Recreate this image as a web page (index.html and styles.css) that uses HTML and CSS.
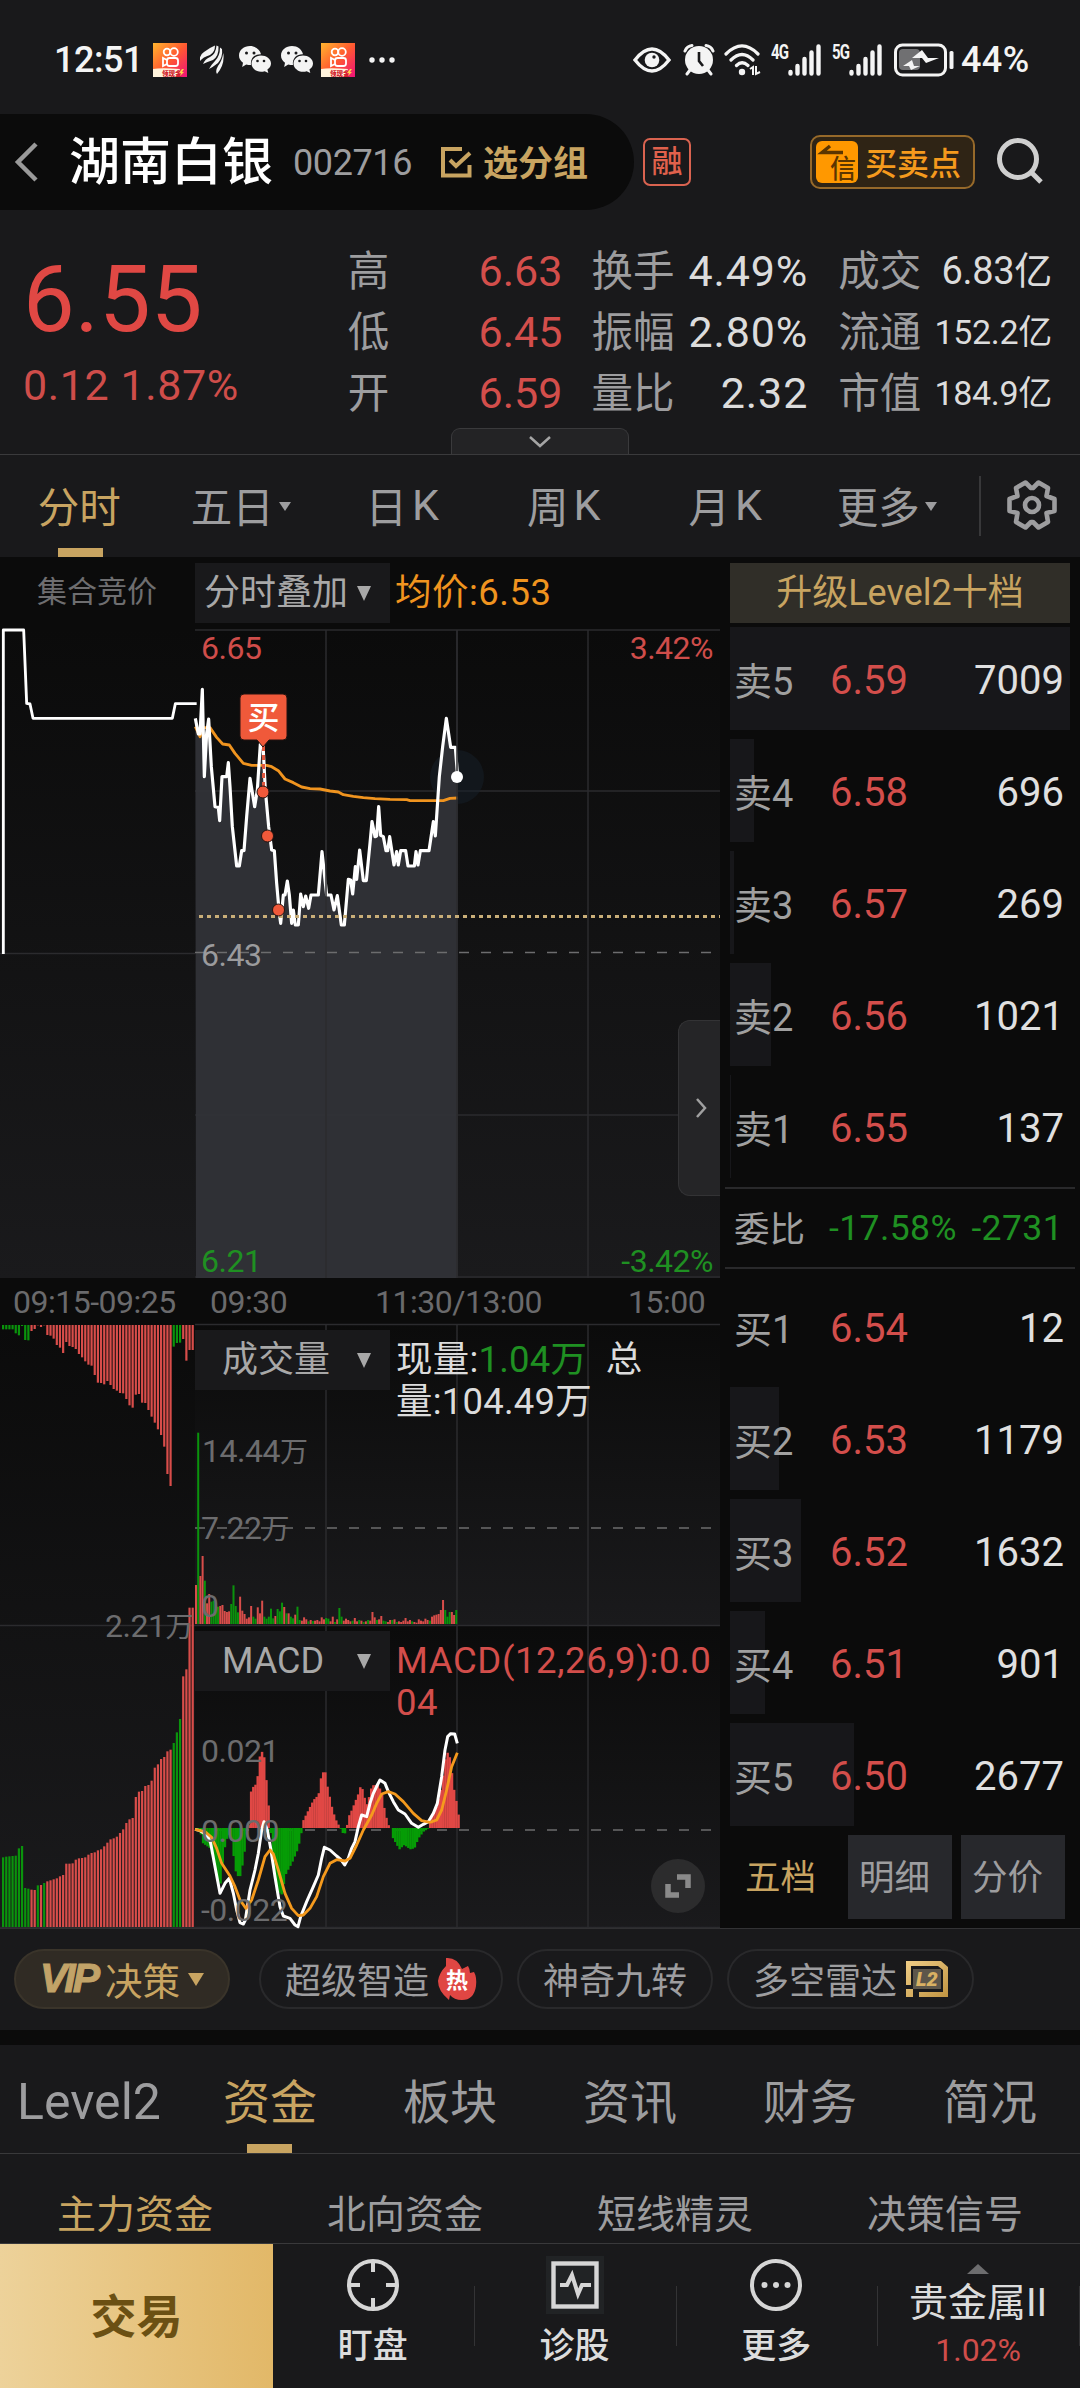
FILE: index.html
```html
<!DOCTYPE html>
<html lang="zh-CN">
<head>
<meta charset="utf-8">
<title>湖南白银 002716</title>
<link rel="stylesheet" href="styles.css">
</head>
<body>
<svg width="0" height="0" class="defs">
  <defs>
    <linearGradient id="ks" x1="0" y1="0" x2="1" y2="1"><stop offset="0" stop-color="#ffb52e"/><stop offset=".5" stop-color="#ff5a30"/><stop offset="1" stop-color="#f0127a"/></linearGradient>
    <linearGradient id="gold" x1="0" y1="0" x2="1" y2="1"><stop offset="0" stop-color="#f0cd86"/><stop offset="1" stop-color="#c09442"/></linearGradient>
    <linearGradient id="panel" x1="0" y1="0" x2="0" y2="1"><stop offset="0" stop-color="#0b0b0b"/><stop offset="1" stop-color="#1a1a1c"/></linearGradient>
    <symbol id="kuaishou" viewBox="0 0 34 34">
      <rect width="34" height="34" fill="url(#ks)"/>
      <g fill="none" stroke="#fff" stroke-width="1.8"><circle cx="14" cy="9" r="3.3"/><circle cx="21" cy="9" r="3.8"/><rect x="14" y="15" width="11" height="8" rx="2.5"/><path d="M14 17l-4-2v8l4-2"/></g>
      <path d="M0 26q8-1.500 27 0l-4 8H0z" fill="#fff3dc"/>
      <text x="9" y="33" class="mini">领现金</text>
      <path d="M29 26l-3 4h2l-1 3 4-4h-2l2-3z" fill="#ffd24a"/>
    </symbol>
    <symbol id="wechat" viewBox="0 0 32 27">
      <path d="M11 0C5 0 0 4 0 9.500c0 3 1.500 5.500 4 7.200L3.200 21l4-2.600c1.500.5 3 .6 4.800.6C11 12 16 8 22 8.200 21 3.400 16.500 0 11 0z" fill="#f4f4f4"/>
      <path d="M22 9.500c-5 0-9.500 3.400-9.500 8s4.500 8.300 9.500 8.300c1.400 0 2.500-.2 3.700-.6l3.600 1.800-.9-3.400c2.200-1.500 3.600-3.600 3.600-6.100 0-4.600-4.700-8-10-8z" fill="#f4f4f4"/>
      <g fill="#19191b"><circle cx="7.500" cy="7" r="1.500"/><circle cx="15" cy="7" r="1.500"/><circle cx="18.500" cy="15" r="1.300"/><circle cx="25" cy="15" r="1.300"/></g>
    </symbol>
    <symbol id="signal" viewBox="0 0 34 32"><path d="M2.500 28v1.500M9.500 22v7.500M16.500 15v14.500M23.500 8.500v21M30.500 2.500v27" stroke="#f4f4f4" stroke-width="4.400" stroke-linecap="round"/></symbol>
  </defs>
</svg>
<div class="screen">
  <header class="status">
    <div class="status-left">
      <span class="clock">12:51</span>
      <svg class="s-ks" width="34" height="34"><use href="#kuaishou"/></svg>
      <svg class="s-leaf" width="24" height="29" viewBox="0 0 24 29" fill="#f4f4f4"><path d="M0 16Q-1 10 4 7 9 3 15 .5 15 7 10 10 3 12 0 16z"/><path d="M3 19Q5 14 10 12 16 9 16.500 .500L18.500 1.500Q19 11 13 15 7 17 3 19z"/><path d="M9 24Q11 20 15 16 20 11 20 2.500L22 4Q23 12 18 18 13 22 9 24z"/><path d="M17 29Q15 26 18 21 22 16 23.300 8 25 20 17 29z"/></svg>
      <svg class="s-wx" width="32" height="27"><use href="#wechat"/></svg>
      <svg class="s-wx2" width="32" height="27"><use href="#wechat"/></svg>
      <svg class="s-ks2" width="34" height="34"><use href="#kuaishou"/></svg>
      <svg class="s-dots" width="26" height="6" fill="#f4f4f4"><circle cx="3" cy="3" r="2.700"/><circle cx="13" cy="3" r="2.700"/><circle cx="23" cy="3" r="2.700"/></svg>
    </div>
    <div class="status-right">
      <svg width="38" height="26" viewBox="0 0 38 26"><path d="M2 13Q19-9 36 13 19 35 2 13z" fill="none" stroke="#f4f4f4" stroke-width="3.400"/><circle cx="19" cy="13" r="7.300" fill="#f4f4f4"/><circle cx="21" cy="10" r="1.700" fill="#19191b"/></svg>
      <svg class="s-alarm" width="32" height="32" viewBox="0 0 32 32"><g stroke="#f4f4f4" stroke-width="3" stroke-linecap="round" fill="none"><path d="M2 7q2-5 7-5.500M30 7q-2-5-7-5.500M7 26l-3 4M25 26l3 4"/></g><circle cx="16" cy="16" r="14" fill="#f4f4f4"/><path d="M16 8v9l4 5" stroke="#19191b" stroke-width="2.600" fill="none"/></svg>
      <svg class="s-wifi" width="38" height="32" viewBox="0 0 38 32"><g fill="none" stroke="#f4f4f4" stroke-width="3.200" stroke-linecap="round"><path d="M2 10Q18-6 34 10M7 16Q18 5 29 16M12.500 21.500Q18 16 24 21.500"/></g><circle cx="18" cy="28" r="3.200" fill="#f4f4f4"/><path d="M26 25l3-2v8M36 28l-4 2v-8" fill="none" stroke="#f4f4f4" stroke-width="2"/></svg>
      <span class="net n4">4G</span><svg width="34" height="32"><use href="#signal"/></svg>
      <span class="net n5">5G</span><svg width="34" height="32"><use href="#signal"/></svg>
      <svg class="s-bat" width="60" height="34" viewBox="0 0 60 34"><rect x="1.500" y="2" width="50" height="30" rx="7" fill="none" stroke="#f4f4f4" stroke-width="3"/><rect x="5" y="6" width="21" height="21" rx="4" fill="#707072"/><rect x="55.500" y="8" width="4" height="18" rx="1.500" fill="#f4f4f4"/><path d="M28 7l-10 8h10l4 5 13-5H34zM18 17l-9 6h6l2 4 9-4h-6z" fill="#f4f4f4"/></svg>
      <span class="pct">44%</span>
    </div>
  </header>

  <section class="title-row">
    <div class="title-pill">
      <svg class="back" width="24" height="40" viewBox="0 0 24 40"><path d="M22 2L4 20l18 18" fill="none" stroke="#9a9a9a" stroke-width="4.500"/></svg>
      <h1>湖南白银</h1><span class="code">002716</span>
      <svg class="check" width="31" height="31" viewBox="0 0 31 31" fill="none" stroke="#c8a461" stroke-width="4"><path d="M21 2H2v26.500h26.500V18"/><path d="M9 13l6 6L29 6"/></svg>
      <b class="group">选分组</b>
    </div>
    <span class="rong">融</span>
    <span class="signal-btn"><svg width="42" height="42" viewBox="0 0 42 42"><rect width="42" height="42" rx="6" fill="#ff9800"/><path d="M27 11.500H6L14 5" fill="none" stroke="#5b3500" stroke-width="3.400"/><text x="14" y="37" class="xin">信</text></svg><span>买卖点</span></span>
    <svg class="search" width="50" height="50" viewBox="0 0 50 50" fill="none" stroke="#cfcfcf" stroke-width="5"><circle cx="22" cy="22" r="18.500"/><path d="M35 35l10 10"/></svg>
  </section>

  <section class="quote">
    <div class="now"><strong>6.55</strong><span>0.12 1.87%</span></div>
    <dl class="q1"><dt>高</dt><dd>6.63</dd><dt>低</dt><dd>6.45</dd><dt>开</dt><dd>6.59</dd></dl>
    <dl class="q2"><dt>换手</dt><dd>4.49%</dd><dt>振幅</dt><dd>2.80%</dd><dt>量比</dt><dd>2.32</dd></dl>
    <dl class="q3"><dt>成交</dt><dd class="mid">6.83亿</dd><dt>流通</dt><dd>152.2亿</dd><dt>市值</dt><dd>184.9亿</dd></dl>
    <div class="pull"><svg width="22" height="12" viewBox="0 0 22 12"><path d="M1 1l10 9L21 1" fill="none" stroke="#a5a5a5" stroke-width="2.500"/></svg></div>
  </section>

  <nav class="periods">
    <a class="on">分时</a><a>五日<i class="tri"></i></a><a>日<em>K</em></a><a>周<em>K</em></a><a>月<em>K</em></a><a>更多<i class="tri"></i></a>
    <span class="gear"><svg width="54" height="54" viewBox="-27 -27 54 54" fill="none" stroke="#9d9d9f" stroke-width="4.600" stroke-linejoin="round"><path d="M-6.500-22.500L-16-17l1.500 8L-22.500-6v12l8 2L-16 17l9.500 5.500L-1 17h2l5.500 5.500L16 17l-1.500-9 8-2V-6l-8-3L16-17l-9.500-5.500L1-17h-2z"/><circle r="7"/></svg></span>
  </nav>

  <main class="board">
    <div class="charts">
      <div class="chart-head">
        <span class="auction">集合竞价</span>
        <span class="drop wide">分时叠加<i class="arrow"></i></span>
        <span class="avg">均价:6.53</span>
      </div>
      <div class="panel">
        <svg width="720" height="649" viewBox="0 629 720 649">
          <rect y="629" width="720" height="649" fill="url(#panel)"/>
          <g class="grid"><path d="M195 630H720M195 791H720M195 1115H720M195 1277H720M326 630V1278M457 630V1278M588 630V1278M0 953.500H195"/></g>
          <circle cx="457" cy="777" r="27" fill="#16202a" opacity=".5"/>
          <g id="price" transform="translate(0 600) scale(.33333)"></g>
          <path class="grid" d="M326 840V1278M457 630V1278"/>
          <path class="dash" d="M195 952.500H720" stroke-dasharray="10 12"/>
          <path class="gold-dots" d="M199 916.500H720"/>
          <text class="lab red" x="201" y="659">6.65</text><text class="lab red end" x="713" y="659">3.42%</text>
          <text class="lab mid-lab" x="201" y="966">6.43</text>
          <text class="lab green" x="201" y="1272">6.21</text><text class="lab green end" x="713" y="1272">-3.42%</text>
          <path d="M263.500 746V788" stroke="#e0583f" stroke-width="3" stroke-dasharray="5 4"/>
          <g fill="#f0593a" stroke="#241310" stroke-width="1"><circle cx="263" cy="792" r="6"/><circle cx="267.500" cy="836" r="6"/><circle cx="278.500" cy="910" r="6"/><path d="M244 694H283a4 4 0 0 1 4 4V736a4 4 0 0 1-4 4H269l-6 7-6-7H244a4 4 0 0 1-4-4V698a4 4 0 0 1 4-4z"/></g>
          <text class="buy" x="263.500" y="729">买</text>
          <circle cx="457" cy="777" r="6" fill="#fff"/>
        </svg>
        <div class="side-handle"><svg width="14" height="22" viewBox="0 0 14 22"><path d="M2 2l8 9-8 9" fill="none" stroke="#a0a0a0" stroke-width="2.500"/></svg></div>
      </div>
      <div class="times"><span>09:15-09:25</span><span>09:30</span><span>11:30/13:00</span><span>15:00</span></div>
      <div class="panel">
        <svg width="720" height="604" viewBox="0 1324 720 604">
          <rect y="1324" width="195" height="604" fill="url(#panel)"/>
          <rect x="195" y="1324" width="525" height="301" fill="url(#panel)"/>
          <rect x="195" y="1626" width="525" height="302" fill="url(#panel)"/>
          <path class="grid" d="M195 1324.500H720M0 1625.500H720M0 1927.500H720M326 1324V1928M457 1324V1928M588 1324V1928"/>
          <path class="dash" d="M195 1528H720" stroke-dasharray="10 12"/>
          <path class="dash" d="M195 1830H720" stroke-dasharray="10 12"/>
          <g id="auction"></g><g id="volume"></g>
          <g id="macd" transform="translate(180 1600) scale(.33333)"></g>
          <text class="lab gray" x="202" y="1462">14.44<tspan class="wan">万</tspan></text><text class="lab gray" x="201" y="1539">7.22<tspan class="wan">万</tspan></text><text class="lab gray" x="201" y="1617">0</text>
          <text class="lab gray end" x="193" y="1637">2.21<tspan class="wan">万</tspan></text>
          <text class="lab gray" x="201" y="1762">0.021</text><text class="lab gray" x="201" y="1842">0.000</text><text class="lab gray" x="201" y="1921">-0.022</text>
        </svg>
        <div class="over vol"><span class="drop">成交量<i class="arrow"></i></span><p>现量:<span class="g">1.04万</span>&nbsp; 总<br>量:104.49万</p></div>
        <div class="over mac"><span class="drop">MACD<i class="arrow"></i></span><p class="r">MACD(12,26,9):0.0<br>04</p></div>
        <div class="expand"><svg width="28" height="26" viewBox="0 0 28 26" fill="none" stroke="#8a8a8a" stroke-width="5.500"><path d="M13 4h11v11M4 11v11h11"/></svg></div>
      </div>
    </div>

    <aside class="book">
      <div class="upgrade">升级Level2十档</div>
      <ul>
        <li><i style="width:340px"></i><b>卖5</b><em>6.59</em><span>7009</span></li>
        <li><i style="width:24px"></i><b>卖4</b><em>6.58</em><span>696</span></li>
        <li><i style="width:4px"></i><b>卖3</b><em>6.57</em><span>269</span></li>
        <li><i style="width:41px"></i><b>卖2</b><em>6.56</em><span>1021</span></li>
        <li><i style="width:1px"></i><b>卖1</b><em>6.55</em><span>137</span></li>
      </ul>
      <div class="ratio"><b>委比</b><span>-17.58%</span><span>-2731</span></div>
      <ul>
        <li><i style="width:0px"></i><b>买1</b><em>6.54</em><span>12</span></li>
        <li><i style="width:49px"></i><b>买2</b><em>6.53</em><span>1179</span></li>
        <li><i style="width:71px"></i><b>买3</b><em>6.52</em><span>1632</span></li>
        <li><i style="width:35px"></i><b>买4</b><em>6.51</em><span>901</span></li>
        <li><i style="width:124px"></i><b>买5</b><em>6.50</em><span>2677</span></li>
      </ul>
      <div class="book-tabs"><a class="on">五档</a><a>明细</a><a>分价</a></div>
    </aside>
  </main>

  <section class="chips">
    <span class="chip vip"><b>VIP</b>决策<i class="arrow"></i></span>
    <span class="chip c2">超级智造<svg width="40" height="44" viewBox="0 0 40 44"><path d="M9 1Q20 0 25 12l6-3Q33 12 33 16l4-1Q40 20 39 29 37 43 25 43q-8 0-12-5l-1 5Q1 34 1 24 2 16 9 9z" fill="#e04643"/><text x="9" y="31" class="hot">热</text></svg></span>
    <span class="chip c3">神奇九转</span>
    <span class="chip c4">多空雷达<svg width="42" height="36" viewBox="0 0 42 36"><path d="M0 0H35l7 6V36H13V31H37V9L32 5H5V24H0zM0 28H7V36H0z" fill="url(#gold)"/><rect x="7" y="8" width="28" height="20" fill="#5d564a"/><text x="10" y="25" class="l2">L2</text></svg></span>
  </section>

  <nav class="info-tabs"><a class="lv">Level2</a><a class="on">资金</a><a>板块</a><a>资讯</a><a>财务</a><a>简况</a></nav>
  <nav class="sub-tabs"><a class="on">主力资金</a><a>北向资金</a><a>短线精灵</a><a>决策信号</a></nav>

  <footer class="bottom">
    <a class="trade">交易</a>
    <a class="item"><svg width="58" height="58" viewBox="-29 -29 58 58" fill="none" stroke="#d6d6d6" stroke-width="4"><circle r="24"/><path d="M0-24v11M0 24V13M-24 0h11M24 0H13"/></svg>盯盘</a>
    <a class="item"><svg width="58" height="58" viewBox="-29 -29 58 58" fill="none" stroke="#d6d6d6" stroke-width="4.400"><rect x="-29" y="-29" width="58" height="58" fill="#212325" stroke="none"/><rect x="-21.500" y="-21.500" width="43" height="43"/><path d="M-15 0h7l5-10 6 19 4-9h9" stroke-width="4"/></svg>诊股</a>
    <a class="item"><svg width="58" height="58" viewBox="-29 -29 58 58" fill="none" stroke="#d6d6d6" stroke-width="4"><circle r="24"/><g fill="#d6d6d6" stroke="none"><circle cx="-11.500" r="3"/><circle r="3"/><circle cx="11.500" r="3"/></g></svg>更多</a>
    <a class="item sector"><i class="up"></i><span>贵金属II</span><small>1.02%</small></a>
  </footer>
</div>
<script src="chart.js"></script>
</body>
</html>
```
FILE: styles.css
```css
* { box-sizing: border-box; margin: 0; padding: 0; }
body { width: 1080px; background: #19191b; font-family: Roboto, "Noto Sans CJK SC", sans-serif; color: #9d9d9f; }
svg { display: block; flex: none; }
i, em { font-style: normal; }
.defs { position: absolute; }
.screen { width: 1080px; height: 2388px; overflow: hidden; display: flex; flex-direction: column; white-space: nowrap; }
.screen > * { flex: none; }

.status { height: 114px; padding: 0 47px 0 54px; display: flex; justify-content: space-between; align-items: center; color: #f4f4f4; }
.status-left, .status-right { display: flex; align-items: center; height: 40px; margin-top: 5px; }
.clock { width: 99px; font-size: 36px; font-weight: 500; letter-spacing: -.5px; }
.s-leaf { margin-left: 13px; }
.s-wx { margin-left: 15px; }
.s-wx2 { margin-left: 10px; }
.s-ks2 { margin-left: 8px; }
.s-dots { margin-left: 14px; }
.s-alarm { margin-left: 12px; }
.s-wifi { margin-left: 9px; }
.net { font-size: 20px; font-weight: 700; line-height: 16px; width: 17px; align-self: flex-start; margin-top: 4px; letter-spacing: -1px; transform: scaleX(.75); transform-origin: 0 0; }
.n4 { margin-left: 9px; }
.n5 { margin-left: 10px; }
.s-bat { margin-left: 11px; }
.pct { width: 72px; margin-left: 7px; font-size: 36px; font-weight: 500; letter-spacing: .4px; }
.mini { font-size: 6.500px; font-weight: 900; fill: #d0202c; }

.title-row { height: 96px; display: flex; align-items: center; }
.title-pill { width: 634px; height: 96px; background: #0b0b0b; border-radius: 0 48px 48px 0; display: flex; align-items: center; padding-left: 14px; }
.title-pill h1 { width: 224px; margin: 2px 0 0 31px; font-size: 51px; line-height: 60px; font-weight: 500; color: #fff; }
.code { width: 148px; font-size: 36px; letter-spacing: -.4px; margin-top: 2px; }
.group { margin: -3px 0 0 11px; font-size: 35px; color: #c8a461; }
.rong { width: 48px; height: 48px; margin-left: 9px; border: 2px solid #d96350; border-radius: 7px; font-size: 31px; line-height: 43px; text-align: center; color: #e0614c; font-weight: 500; }
.signal-btn { width: 165px; height: 54px; margin-left: 119px; border: 2px solid #96692a; border-radius: 10px; background: #2f2415; display: flex; align-items: center; gap: 7px; padding-left: 4px; font-size: 32px; font-weight: 500; color: #f59a1d; }
.signal-btn span { margin-top: -3px; }
.xin { font-size: 26px; fill: #5b3500; }
.search { margin-left: 21px; }

.quote { position: relative; height: 245px; border-bottom: 1px solid #3a3a3c; display: flex; padding: 31px 28px 0 23px; }
.now { width: 325px; color: #e04844; display: flex; flex-direction: column; }
.now strong { font-size: 92px; font-weight: 400; line-height: 117px; letter-spacing: 0; }
.now span { font-size: 43px; line-height: 54px; letter-spacing: .6px; color: #cf4d4a; }
.quote dl { display: grid; grid-template-columns: auto 1fr; grid-auto-rows: 61px; align-items: center; line-height: 61px; height: 183px; }
.quote dt { font-size: 41.500px; }
.quote dd { font-size: 43px; text-align: right; color: #dcdcdc; }
.q1 { width: 215px; }
.quote .q1 dd { color: #d34e4b; }
.q2 { width: 217px; margin-left: 29px; }
.quote .q2 dd { letter-spacing: .9px; }
.q3 { width: 214px; margin-left: 30px; }
.quote .q3 dd { font-size: 34px; letter-spacing: -.3px; }
.quote .q3 .mid { font-size: 38px; }
.pull { position: absolute; left: 451px; bottom: 0; width: 178px; height: 26px; border: 1px solid #3a3a3c; border-bottom: 0; border-radius: 9px 9px 0 0; background: #232325; display: flex; justify-content: center; align-items: center; }

.periods { height: 102px; display: flex; font-size: 41.500px; }
.periods a { width: 161.500px; display: flex; align-items: center; justify-content: center; padding: 0 3px 2px 0; }
.periods em { margin-left: 5px; font-size: 43px; }
.periods .on { color: #c8a461; background: linear-gradient(#c8a461, #c8a461) 58px 100% / 45px 9px no-repeat; }
.tri { margin: 2px 0 0 5px; border: 6px solid transparent; border-top: 9px solid #9d9d9f; border-bottom: 0; }
.gear { width: 101px; height: 60px; margin: 21px 0 0 10px; border-left: 2px solid #38383a; padding: 2px 0 0 24px; }

.board { height: 1371px; display: flex; background: #0b0b0b; }
.charts { width: 720px; }
.chart-head { height: 72px; display: flex; padding-top: 6px; }
.auction { width: 195px; padding: 0 0 0 37px; font-size: 30px; line-height: 58px; color: #6e6e70; }
.drop { width: 195px; height: 60px; background: #19191b; color: #a8a8a8; font-size: 36px; line-height: 60px; display: flex; align-items: center; justify-content: space-between; padding: 0 19px 0 27px; }
.drop.wide { padding-left: 9px; }
.arrow { border: 7.500px solid transparent; border-top: 15px solid #a8a8a8; border-bottom: 0; }
.avg { margin-left: 5px; font-size: 36.500px; letter-spacing: .5px; line-height: 60px; color: #f0941f; }
.panel { position: relative; }
.panel > svg { overflow: visible; }
.grid { stroke: #2b2b2e; stroke-width: 1.500; fill: none; }
.dash { stroke: #6c6c6e; stroke-width: 1.500; }
.gold-dots { stroke: #c9ae78; stroke-width: 3; stroke-dasharray: 4 4; }
.lab { font-size: 32px; letter-spacing: -.5px; }
.wan { font-size: 28px; }
.end { text-anchor: end; }
.red { fill: #cf4d4a; }
.green { fill: #1f9022; }
.gray { fill: #6c6c6e; }
.mid-lab { fill: #9b9b9d; }
.buy { font-size: 32px; fill: #fff; text-anchor: middle; font-weight: 500; }
.side-handle { position: absolute; right: 0; top: 391px; width: 42px; height: 176px; border-radius: 12px 0 0 12px; background: #252527; border: 1px solid #333335; border-right: 0; display: flex; align-items: center; padding-left: 16px; }
.times { height: 46px; display: grid; grid-template-columns: 197px 165px 253px 90px; align-items: center; padding: 2px 0 0 13px; font-size: 32px; letter-spacing: -.5px; color: #6a6a6c; }
.over { position: absolute; left: 195px; right: 0; display: flex; font-size: 36.500px; line-height: 42px; color: #dcdcdc; }
.vol { top: 6px; }
.mac { top: 307px; }
.over p { margin-left: 6px; padding-top: 9px; letter-spacing: .2px; }
.over .r { color: #d34e4b; font-size: 36.500px; letter-spacing: .6px; }
.g { color: #1f9022; }
.expand { position: absolute; left: 651px; top: 535px; width: 54px; height: 54px; border-radius: 50%; background: #2c2c2d; display: flex; align-items: center; justify-content: center; }

.book { width: 342px; margin-left: 10px; padding-top: 6px; }
.upgrade { width: 340px; height: 60px; background: #302e28; color: #c8a461; font-size: 36px; line-height: 60px; text-align: center; margin-bottom: 4px; }
.book ul { list-style: none; display: grid; grid-auto-rows: 103px; gap: 9px; }
.book li { position: relative; display: flex; align-items: center; width: 340px; padding: 3px 6px 0 4px; }
.book li i { position: absolute; left: 0; top: 0; height: 103px; background: #17171a; }
.book li b, .book li em, .book li span { position: relative; }
.book li b { width: 96px; margin-top: -3px; font-size: 38px; font-weight: 400; color: #a0a0a0; }
.book li em { font-size: 40px; color: #d34e4b; }
.book li span { margin-left: auto; font-size: 40px; color: #e0e0e0; }
.ratio { height: 82px; margin: 9px 0 6px -5px; width: 350px; border: solid #29292b; border-width: 2px 0; display: flex; align-items: center; padding: 0 0 0 9px; font-size: 35.500px; letter-spacing: .4px; color: #1f9022; }
.ratio b { width: 95px; margin-top: -3px; font-weight: 400; color: #a0a0a0; letter-spacing: 0; }
.ratio span + span { margin-left: auto; padding-right: 12px; }
.book-tabs { display: flex; gap: 9px; margin-top: 9px; width: 335px; }
.book-tabs a { width: 104px; height: 84px; background: #27282c; font-size: 35.500px; line-height: 86px; padding-left: 11px; }
.book-tabs .on { width: 109px; background: none; color: #c8a461; padding-left: 15px; }

.chips { height: 102px; border-top: 1px solid #333335; display: flex; align-items: flex-start; padding: 20px 0 0 14px; }
.chip { height: 60px; border: 2px solid #29292b; border-radius: 30px; display: flex; align-items: center; padding: 0 0 2px 24px; font-size: 36px; }
.chip svg { margin-top: 2px; }
.vip { width: 216px; background: #302b24; border-color: #3a342a; color: #c8a461; font-size: 37.500px; }
.vip b { width: 65px; font-family: "Liberation Sans", sans-serif; font-style: italic; font-size: 41px; font-weight: 700; letter-spacing: -3px; color: #c2a368; -webkit-text-stroke: 1px #c2a368; }
.vip .arrow { margin: 2px 0 0 8px; border-width: 8px; border-top: 13px solid #c8a461; border-bottom: 0; }
.c2 { width: 244px; margin-left: 29px; gap: 8px; }
.c3 { width: 196px; margin-left: 14px; }
.c4 { width: 247px; margin-left: 14px; gap: 9px; }
.hot { font-size: 22px; font-weight: 700; fill: #fff; }
.l2 { font-size: 20px; font-weight: 900; fill: #d9b163; font-style: italic; }

.info-tabs { height: 124px; border-top: 15px solid #0b0b0b; border-bottom: 1px solid #39393b; display: flex; font-size: 47px; }
.info-tabs a { width: 180px; line-height: 115px; height: 108px; text-align: center; }
.info-tabs .lv { font-size: 50px; padding-right: 2px; }
.info-tabs .on { color: #c8a461; background: linear-gradient(#c8a461, #c8a461) 67px 100% / 45px 9px no-repeat; }
.sub-tabs { height: 90px; border-bottom: 1px solid #39393b; display: flex; font-size: 39px; }
.sub-tabs a { width: 270px; line-height: 122px; text-align: center; height: 89px; }
.sub-tabs .on { color: #c8a461; }

.bottom { height: 145px; display: flex; font-size: 35px; font-weight: 500; color: #dcdcdc; }
.trade { width: 273px; background: linear-gradient(90deg, #edd29a, #e2b868); color: #6b5013; font-size: 46px; font-weight: 700; line-height: 146px; text-align: center; }
.item { width: 201.750px; display: flex; flex-direction: column; align-items: center; padding: 12px 2px 0 0; line-height: 65px; background: linear-gradient(#333335, #333335) 100% 42px / 1px 60px no-repeat; }
.sector { font-weight: 400; padding-top: 20px; }
.up { border: 11px solid transparent; border-bottom: 10px solid #6d6d6f; border-top: 0; }
.sector span { font-size: 39px; line-height: 58px; }
.sector small { font-size: 32px; line-height: 32px; color: #cf4d4a; margin-top: 2px; }
```
FILE: chart.js
```js
const NS = 'http://www.w3.org/2000/svg';
const RED = '#d84d4a', GREEN = '#0a930c';
function add(id, tag, attrs) {
  const el = document.createElementNS(NS, tag);
  for (const k in attrs) el.setAttribute(k, attrs[k]);
  document.getElementById(id).appendChild(el);
}
function line(id, points, color, width) {
  add(id, 'polyline', { points, fill: 'none', stroke: color, 'stroke-width': width, 'stroke-linejoin': 'round' });
}

// Intraday price and average price
const price = '586,355 595,402 600,402 607,268 613,530 620,400 626,357 634,500 645,620 655,622 659,662 666,530 680,530 685,488 690,560 697,680 710,798 718,798 725,752 732,752 740,650 750,535 764,620 772,570 781,432 789,432 796,570 806,680 815,750 823,752 830,850 838,940 842,970 850,885 855,885 862,843 868,885 875,970 880,930 886,975 895,975 902,882 910,920 917,888 926,925 933,885 955,885 966,755 980,885 993,885 1002,930 1012,887 1024,975 1033,975 1045,838 1052,840 1058,882 1066,800 1070,838 1079,750 1090,842 1099,842 1110,730 1116,665 1125,710 1130,708 1136,620 1142,706 1150,710 1158,752 1163,752 1169,710 1182,795 1190,755 1195,795 1202,752 1217,752 1224,798 1243,798 1248,755 1254,795 1261,752 1287,752 1300,665 1306,708 1318,530 1328,440 1339,355 1352,442 1366,442 1373,530';
add('price', 'polygon', { points: '588,2034 ' + price + ' 1373,2034', fill: '#313237', 'fill-opacity': .97 });
line('price', '586,380 600,410 610,383 630,383 650,412 668,432 688,435 705,460 730,490 755,496 800,496 815,500 835,512 855,537 880,548 905,561 930,566 960,567 990,573 1015,576 1030,584 1060,589 1090,593 1125,596 1170,598 1220,599 1230,602 1330,602 1350,595 1373,594', '#f0941f', 8.5);
line('price', price, '#fff', 9.5);
line('price', '10,1062 10,90 71,90 80,310 90,312 99,355 517,355 526,311 590,311', '#fff', 8.5);

// Call auction bars: unmatched volume hangs from the top, matched stands on the base
const hang = [13,13,13,13,25,31,3,45,46,18,12,1,6,1,30,32,41,60,68,84,51,63,66,72,87,97,109,119,122,150,173,174,178,168,180,192,197,204,205,222,241,248,209,207,233,234,255,275,293,313,330,365,447,483,65,54,53,42,107,75,75];
const stand = [209,211,212,213,214,236,243,117,115,112,111,125,126,132,137,140,143,146,152,156,190,190,191,202,206,207,209,217,222,224,230,233,242,253,263,266,271,282,293,312,323,327,390,406,408,423,426,439,478,488,504,510,527,532,552,584,624,752,773,958,958];
hang.forEach((h, i) => {
  const x = 2 + i * 3.16;
  const mid = i >= 54 && i <= 56;
  add('auction', 'rect', { x, y: 1325, width: 2.2, height: h / 3, fill: i < 9 || mid ? GREEN : RED });
  add('auction', 'rect', { x, y: 1927 - stand[i] / 3, width: 2.2, height: stand[i] / 3, fill: i < 9 || i === 11 || i === 13 || mid ? GREEN : RED });
});

// Minute volume
const vol = 'r117 g574 r144 r204 g130 r62 r90 g67 g70 g62 g52 r54 r57 r39 r36 r38 g60 g116 g54 g35 r82 r40 r30 r16 r20 r54 g22 g16 r50 r32 r70 g22 g16 g22 g46 g17 r24 g45 g38 g64 r51 g32 r32 g22 g17 r28 g52 g12 r10 r20 r14 g8 r12 g9 r10 r12 r8 r20 r14 g18 g16 r8 r22 g6 r14 g48 g22 r10 r16 r12 r8 g10 r18 r8 g12 r10 g6 r8 g12 r10 r36 r20 g12 r14 r24 g10 g8 r6 r12 g12 r14 g6 r8 r6 r10 r18 r8 r12 g8 r6 r4 r14 r10 r8 r16 r12 g10 r22 r26 r28 r30 r42 r72 g42 g22 g36 r36 r27 g42'.split(' ');
vol.forEach((v, i) => {
  const h = v.slice(1) / 3;
  add('volume', 'rect', { x: 195 + i * 262.5 / vol.length, y: 1624 - h, width: 2, height: h, fill: v[0] === 'r' ? RED : GREEN });
});

// MACD histogram, stepped once a minute
const env = [45,688,60,690,66,728,90,745,105,800,120,860,132,750,145,700,155,720,165,810,178,838,190,780,200,700,206,684,208,595,215,565,230,550,240,460,250,452,256,510,262,580,271,684,275,770,290,860,303,890,318,820,335,790,350,755,360,720,366,684,370,660,385,630,400,600,415,585,425,517,436,517,442,560,455,620,465,655,480,684,492,707,500,684,503,655,515,630,525,605,535,580,543,552,555,600,562,618,570,570,580,555,595,555,605,580,615,640,625,675,632,684,636,710,650,735,658,748,672,735,690,748,703,745,715,715,730,695,747,684,755,645,770,620,785,560,795,480,805,450,812,490,820,560,828,600,836,650];
for (let x = 46; x < 832; x += 6.55) {
  let k = 0;
  while (k < env.length - 4 && env[k + 2] < x + 3) k += 2;
  const t = Math.min(1, (x + 3 - env[k]) / (env[k + 2] - env[k]));
  const y = env[k + 1] + t * (env[k + 3] - env[k + 1]);
  add('macd', 'rect', { x, y: Math.min(y, 684), width: 7.4, height: Math.abs(y - 684), fill: y < 684 ? '#e04845' : '#069c06' });
}
line('macd', '45,688 60,692 72,700 85,712 92,730 105,800 120,880 135,850 148,835 160,880 170,930 180,968 190,972 196,960 210,870 225,810 235,760 245,690 252,665 262,690 272,745 285,830 300,920 310,948 330,955 345,975 354,980 362,950 380,905 400,860 415,825 425,775 433,742 450,750 470,768 482,778 494,795 505,775 515,745 525,725 535,680 545,645 560,650 570,610 580,580 592,555 600,540 615,550 625,575 640,605 655,630 675,642 695,670 715,682 730,673 745,665 760,640 772,610 785,530 795,450 803,410 812,401 824,402 832,430', '#fff', 9);
line('macd', '45,688 75,695 95,712 110,745 125,790 150,828 165,860 180,900 198,925 215,900 235,840 255,770 270,750 280,762 295,810 315,880 335,925 355,947 370,945 390,925 410,890 430,830 450,790 470,779 495,783 510,775 530,735 550,690 575,645 590,610 605,582 625,575 645,582 670,605 700,640 725,662 750,667 770,660 785,630 800,570 815,500 832,458', '#f59a1d', 8.5);
```
